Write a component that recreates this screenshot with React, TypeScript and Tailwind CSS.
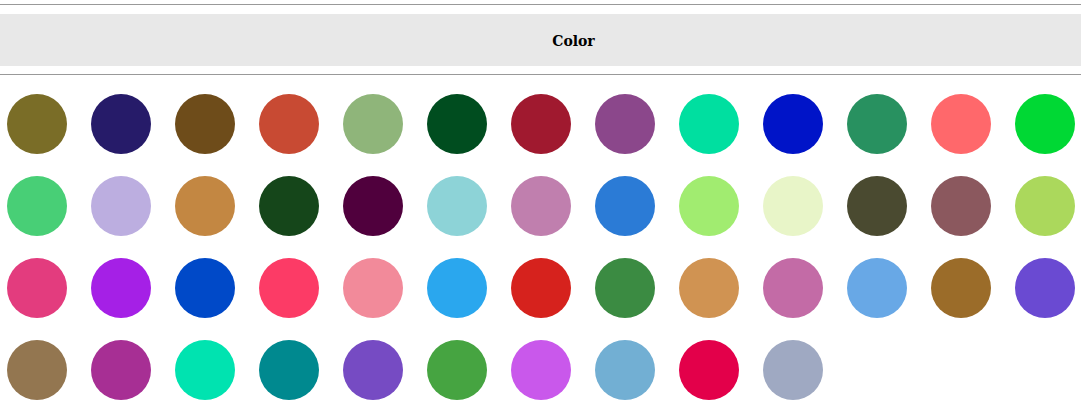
import React from "react";

const COLORS = [
  "#7a6d27", "#261b69", "#6e4c1a", "#c84a33", "#8fb57a", "#004d1f", "#a0192f", "#8b478b", "#00dfa0", "#0014c8", "#289160", "#ff686b", "#00d834",
  "#48cf76", "#bcaee0", "#c38742", "#15461a", "#50003d", "#8dd3d7", "#c07fae", "#2b7bd6", "#a1ec70", "#e8f5c8", "#4a4a30", "#8b585e", "#abd85c",
  "#e33c7e", "#a520e6", "#0049c8", "#fc3b66", "#f28a9a", "#2aa7ee", "#d6221d", "#3b8b42", "#d09352", "#c36ba6", "#68a8e6", "#9b6c29", "#6a4ad2",
  "#937650", "#a72f94", "#00e3b0", "#00898f", "#764bc3", "#46a441", "#c958eb", "#72afd3", "#e3004a", "#9fa9c2",
];

export default function App() {
  return (
    <div className="w-[1081px] h-[410px] bg-white overflow-hidden">
      <div className="pt-[4px]">
        <div className="h-px bg-[#999999]" />
        <div className="mt-[9px] h-[52px] bg-[#e8e8e8] flex items-center justify-center pl-[66px] pt-[3px]">
          <span className="text-[14px] font-bold text-black" style={{ fontFamily: '"DejaVu Serif", serif' }}>
            Color
          </span>
        </div>
        <div className="mt-[8px] h-px bg-[#999999]" />
      </div>
      <div className="pl-[7px] pt-[19px] grid grid-cols-[repeat(13,60px)] gap-x-[24px] gap-y-[22px]">
        {COLORS.map((c) => (
          <div key={c} className="w-[60px] h-[60px] rounded-full" style={{ backgroundColor: c }} />
        ))}
      </div>
    </div>
  );
}
